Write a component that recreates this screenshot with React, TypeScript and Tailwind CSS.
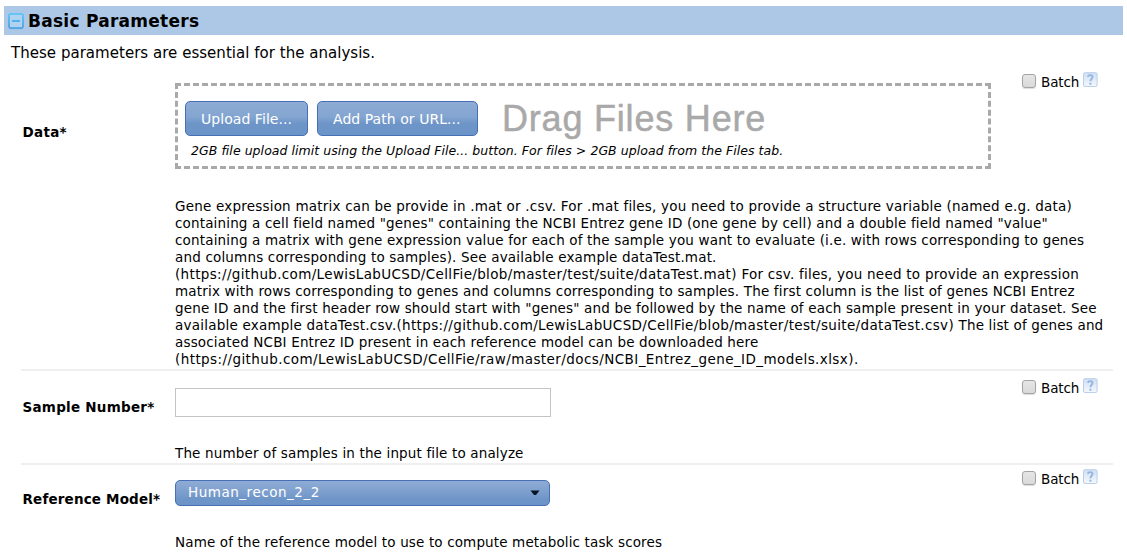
import React from "react";

function CollapseIcon() {
  return (
    <svg width="18" height="20" viewBox="0 0 18 20" fill="none" className="shrink-0">
      <defs>
        <linearGradient id="edge" x1="0" y1="0" x2="0" y2="1">
          <stop offset="0" stopColor="#4cc4f8" />
          <stop offset="1" stopColor="#3f9ce0" />
        </linearGradient>
      </defs>
      <rect x="2" y="3" width="14" height="14" rx="1.5" fill="#b0d2f0" stroke="url(#edge)" strokeWidth="1.6" />
      <path d="M5 10h8" stroke="#45b0ee" strokeWidth="1.8" />
      <path d="M2 18.5h14" stroke="#9fc6ea" />
    </svg>
  );
}

function HelpIcon() {
  return (
    <svg width="16" height="16" viewBox="0 0 16 16" fill="none">
      <defs>
        <linearGradient id="help" x1="0" y1="0" x2="0" y2="1">
          <stop offset="0" stopColor="#cfdff3" />
          <stop offset="1" stopColor="#f5f8fc" />
        </linearGradient>
      </defs>
      <rect x="1.5" y="0.7" width="13.6" height="13.8" rx="1.5" fill="url(#help)" stroke="#b9cfeb" />
      <path d="M5.900 4.800c.2-1.300 1.200-1.700 2.300-1.700 1.500 0 2.300.7 2.300 1.800C10.500 6.800 8.400 7 8.400 9.300" stroke="#94b5e1" strokeWidth="1.900" />
      <path d="M7.400 10.700h2v2h-2z" fill="#94b5e1" />
    </svg>
  );
}

function Batch() {
  return (
    <div className="flex h-4 w-[78px]">
      <span className="ml-[1px] mt-[2px] h-[14px] w-[14px] shrink-0 rounded-[3px] border border-[#a3a3a3] bg-linear-to-b from-[#e6e6e6] to-[#d9d9d9] shadow-[0_1px_1px_#ddd]" />
      <span className="ml-[5px] mt-[2px] w-[41px] shrink-0 text-[13.5px] leading-[17px] tracking-[-0.1px]">Batch</span>
      <span className="shrink-0"><HelpIcon /></span>
    </div>
  );
}

const buttonStyle =
  "h-[35px] rounded-[5px] border border-[#466fb5] bg-[linear-gradient(#8eacd4,#83a5d1_45%,#6e95c8_65%,#6b94c8)] pl-[15px] pt-[2px] text-left text-[14px] text-white whitespace-nowrap tracking-[0.05px]";

type Run = [text: string, spacing: string];

const description: Run[][] = [
  [['Gene expression matrix can be provide in .mat or .csv. For .mat files, you need to provide a structure variable (named e.g. data)', "tracking-[0.21px]"]],
  [['containing a cell field named "genes" containing the NCBI Entrez gene ID (one gene by cell) and a double field named "value"', "tracking-[0.16px]"]],
  [['containing a matrix with gene expression value for each of the sample you want to evaluate (i.e. with rows corresponding to genes', "tracking-[0.165px]"]],
  [['and columns corresponding to samples). See available example dataTest.mat.', "tracking-[0.175px]"]],
  [
    ['(https://github.com/LewisLabUCSD/CellFie/blob/master/test/suite/dataTest.mat)', "tracking-[0.35px]"],
    [' For csv. files, you need to provide an expression', "tracking-[0.25px]"],
  ],
  [['matrix with rows corresponding to genes and columns corresponding to samples. The first column is the list of genes NCBI Entrez', "tracking-[0.18px]"]],
  [['gene ID and the first header row should start with "genes" and be followed by the name of each sample present in your dataset. See', "tracking-[0.165px]"]],
  [
    ['available example dataTest.csv.', "tracking-[0.22px]"],
    ['(https://github.com/LewisLabUCSD/CellFie/blob/master/test/suite/dataTest.csv)', "tracking-[0.35px]"],
    [' The list of genes and', "tracking-[0.17px]"],
  ],
  [['associated NCBI Entrez ID present in each reference model can be downloaded here', "tracking-[0.165px]"]],
  [['(https://github.com/LewisLabUCSD/CellFie/raw/master/docs/NCBI_Entrez_gene_ID_models.xlsx).', "tracking-[0.42px]"]],
];

export default function App() {
  return (
    <main className="h-[558px] w-[1127px] overflow-hidden bg-white pt-[6px] font-['DejaVu_Sans',sans-serif] text-[13.5px] leading-[17px] text-black">
      <header className="mx-1 flex h-[29px] items-center bg-[#adc8e6] pl-[3px]">
        <CollapseIcon />
        <h1 className="ml-[3px] mt-[2px] text-[17px] font-bold whitespace-nowrap tracking-[0.26px]">Basic Parameters</h1>
      </header>
      <p className="h-[34px] pl-[11px] pt-[9px] text-[15px] leading-[18px] tracking-[0.03px]">These parameters are essential for the analysis.</p>

      <section className="ml-[21px] flex h-[302px] w-[1092px] border-b-2 border-[#efefef]">
        <h2 className="w-[154px] shrink-0 pl-[1.500px] pt-[55px] font-bold tracking-[0.3px]">Data*</h2>
        <div className="w-[846px] shrink-0 pt-[14px]">
          <div className="h-[86px] w-[816px] border-[3px] border-dashed border-[#a9a9a9] pl-[7px] pt-[15px]">
            <div className="flex h-[35px] items-center">
              <button className={buttonStyle + " w-[123px]"}>Upload File...</button>
              <button className={buttonStyle + " ml-[9px] w-[161px]"}>Add Path or URL...</button>
              <span className="ml-[24px] font-['Liberation_Sans',sans-serif] text-[36px] leading-[35px] tracking-[0.8px] text-[#a9a9a9] [-webkit-text-stroke:0.5px_#a9a9a9]">Drag Files Here</span>
            </div>
            <p className="mt-[6px] pl-[6px] text-[12.5px] italic whitespace-nowrap tracking-[0.05px]">2GB file upload limit using the Upload File... button. For files &gt; 2GB upload from the Files tab.</p>
          </div>
          <div className="mt-[29px] whitespace-pre">
            {description.map((runs) => (
              <p key={runs[0][0]}>
                {runs.map(([text, spacing]) => <span key={text} className={spacing}>{text}</span>)}
              </p>
            ))}
          </div>
        </div>
        <div className="pt-[3px]"><Batch /></div>
      </section>

      <section className="ml-[21px] flex h-[94px] w-[1092px] border-b-2 border-[#efefef]">
        <h2 className="w-[154px] shrink-0 pl-[1.500px] pt-[28px] font-bold whitespace-nowrap tracking-[0.25px]">Sample Number*</h2>
        <div className="w-[846px] shrink-0 pt-[17px]">
          <input className="block h-[29px] w-[376px] border border-[#c4c4c4] bg-white px-2 outline-none" aria-label="Sample Number" />
          <p className="mt-[28px] tracking-[0.15px]">The number of samples in the input file to analyze</p>
        </div>
        <div className="pt-[7px]"><Batch /></div>
      </section>

      <section className="ml-[21px] flex w-[1092px]">
        <h2 className="w-[154px] shrink-0 pl-[1.500px] pt-[26px] font-bold whitespace-nowrap tracking-[0.17px]">Reference Model*</h2>
        <div className="w-[846px] shrink-0 pt-[15px]">
          <button className="flex h-[26px] w-[375px] items-center justify-between rounded-[5px] border border-[#466fb5] bg-[linear-gradient(#8eacd4,#7e9fce_45%,#6e95c8_75%,#6b94c8)] pr-[9px] pl-[12px] text-white">
            <span className="-mt-[2px] tracking-[0.53px]">Human_recon_2_2</span>
            <svg width="10" height="6" viewBox="0 0 10 6"><path d="M0.500 0.500h9L6 5H4z" fill="#071722" /></svg>
          </button>
          <p className="mt-[28px] tracking-[0.14px]">Name of the reference model to use to compute metabolic task scores</p>
        </div>
        <div className="pt-[4px]"><Batch /></div>
      </section>
    </main>
  );
}
